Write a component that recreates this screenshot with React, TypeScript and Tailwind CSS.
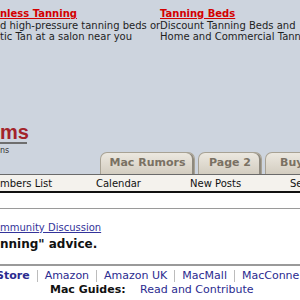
import React from 'react';

const verdana = { fontFamily: '"DejaVu Sans", Verdana, sans-serif' };

function AdBlock({ title, lines }: { title: string; lines: string[] }) {
  return (
    <div className="text-[10px] leading-[11px] text-[#1e1e1e] whitespace-nowrap">
      <div className="font-bold text-[#d40000] underline underline-offset-[1px] mb-[1px]">{title}</div>
      {lines.map((l) => (
        <div key={l}>{l}</div>
      ))}
    </div>
  );
}

function Tab({ label, width }: { label: string; width: string }) {
  return (
    <div
      className={`${width} h-[22px] shrink-0 rounded-t-[7px] border border-b-0 border-[#a8a294] bg-gradient-to-b from-[#ece8e0] to-[#d3cdc0] shadow-[inset_-2px_0_0_#8e897e] flex items-center justify-center text-[11px] font-bold text-[#7a7163]`}
    >
      {label}
    </div>
  );
}

export default function App() {
  return (
    <div className="w-[300px] h-[300px] overflow-hidden bg-white" style={verdana}>
      {/* header */}
      <div className="h-[174px] bg-[#cdd4de] flex flex-col">
        <div className="flex pt-[8px]">
          <div className="w-[160px] shrink-0">
            <AdBlock title="nless Tanning" lines={['d high-pressure tanning beds or', 'tic Tan at a salon near you']} />
          </div>
          <AdBlock title="Tanning Beds" lines={['Discount Tanning Beds and', 'Home and Commercial Tann']} />
        </div>

        <div className="mt-auto flex items-end">
          <div className="w-[100px] shrink-0 mb-[19px]">
            <div
              className="text-[20px] leading-[18px] font-bold text-[#a3232a] w-[27px] border-b-2 border-[#6e6e6e] pb-[1px]"
              style={{ fontFamily: '"Liberation Sans", Arial, sans-serif' }}
            >
              ms
            </div>
            <div className="text-[8px] leading-[9px] text-[#333] mt-[2px]">ns</div>
          </div>
          <div className="flex items-end gap-[3px]">
            <Tab label="Mac Rumors" width="w-[95px]" />
            <Tab label="Page 2" width="w-[64px]" />
            <div className="w-[60px] h-[22px] shrink-0 rounded-t-[7px] border border-b-0 border-[#a8a294] bg-gradient-to-b from-[#ece8e0] to-[#d3cdc0] flex items-center pl-[14px] text-[11px] font-bold text-[#7a7163]">
              Buy
            </div>
          </div>
        </div>
      </div>

      {/* nav bar */}
      <div className="h-[19px] border-t border-[#6a6a6a] border-b-2 border-b-[#111] bg-[#f4f2ed] grid grid-cols-[96px_94px_100px_auto] items-center text-[10px] text-[#111] whitespace-nowrap">
        <span>mbers List</span>
        <span>Calendar</span>
        <span>New Posts</span>
        <span>Se</span>
      </div>

      {/* content */}
      <div className="mt-[15px] border-t border-[#9a9a9a]" />
      <div className="pt-[13px]">
        <div className="text-[10px] leading-[12px] text-[#33339a] underline">mmunity Discussion</div>
        <div className="mt-[3px] text-[12px] leading-[15px] font-bold text-[#111]">nning" advice.</div>
      </div>
      <div className="mt-[12px] border-t-2 border-[#9a9a9a]" />

      <div className="mt-[3px] flex items-center text-[11px] leading-[13px] text-[#2b2b8f] whitespace-nowrap">
        <span className="-ml-[4px] font-bold">Store</span>
        <span className="mx-[7px] w-px h-[12px] bg-[#bcbcbc]" />
        <span>Amazon</span>
        <span className="mx-[7px] w-px h-[12px] bg-[#bcbcbc]" />
        <span>Amazon UK</span>
        <span className="mx-[7px] w-px h-[12px] bg-[#bcbcbc]" />
        <span>MacMall</span>
        <span className="mx-[7px] w-px h-[12px] bg-[#bcbcbc]" />
        <span>MacConne</span>
      </div>
      <div className="mt-[1px] flex text-[11px] leading-[13px] whitespace-nowrap">
        <span className="ml-[50px] w-[90px] font-bold text-[#111]">Mac Guides:</span>
        <span className="text-[#2b2b8f]">Read and Contribute</span>
      </div>
    </div>
  );
}
